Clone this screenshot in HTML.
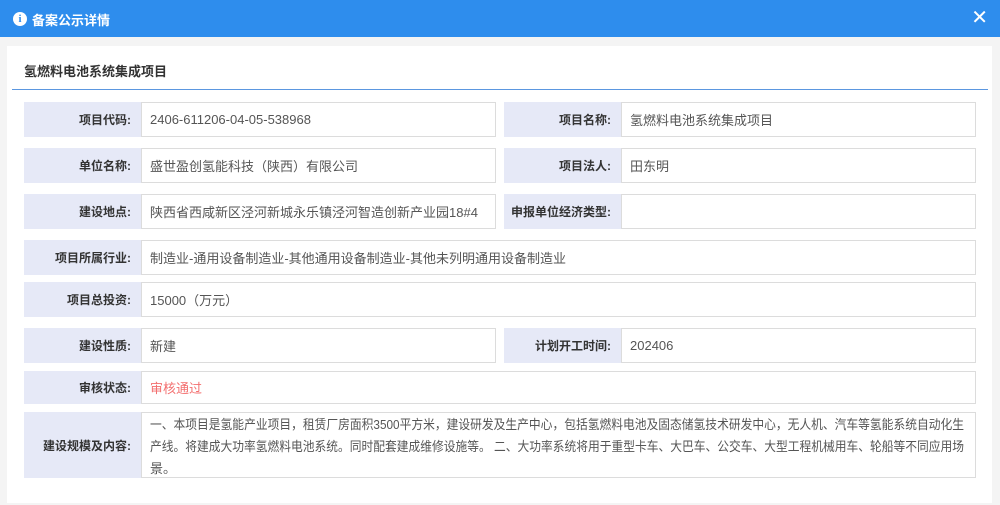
<!DOCTYPE html>
<html><head><meta charset="utf-8"><style>
*{margin:0;padding:0;box-sizing:border-box}
body{width:1000px;height:505px;background:#f4f4f4;font-family:"Liberation Sans","Noto Sans CJK SC",sans-serif;position:relative;overflow:hidden}
.hd{position:absolute;left:0;top:0;width:1000px;height:37px;background:#2e8ded;color:#fff;font-size:13px}
.hd .ic{position:absolute;left:13px;top:12px;width:14px;height:14px;border-radius:50%;background:#fff;color:#2e8ded;font-size:11px;font-weight:bold;text-align:center;line-height:14px;font-family:"Liberation Serif",serif}
.hd .t{position:absolute;left:32px;top:10px;font-weight:bold}
.hd .x{position:absolute;right:12px;top:8px;font-size:20px;line-height:20px;font-weight:normal}
.pn{position:absolute;left:7px;top:46px;width:985px;height:457px;background:#fff}
.ti{position:absolute;left:24px;top:61px;font-size:13px;font-weight:bold;color:#333}
.ln{position:absolute;left:12px;top:89px;width:976px;height:1px;background:#5b97e0}
.l{position:absolute;background:#e6e9f7;font-size:12px;font-weight:bold;color:#333;text-align:right;padding-right:10px;display:flex;align-items:center;justify-content:flex-end}
.v{position:absolute;background:#fff;border:1px solid #dcdcdc;font-size:13px;color:#555;padding-left:8px;display:flex;align-items:center}
.m{display:block;padding:0}
</style></head><body>
<div class="hd"><div class="ic">i</div><div class="t">备案公示详情</div><div class="x">✕</div></div>
<div class="pn"></div>
<div class="ti">氢燃料电池系统集成项目</div>
<div class="ln"></div>

<div class="l" style="left:24px;top:102px;width:117px;height:35px">项目代码:</div>
<div class="v" style="left:141px;top:102px;width:355px;height:35px">2406-611206-04-05-538968</div>
<div class="l" style="left:504px;top:102px;width:117px;height:35px">项目名称:</div>
<div class="v" style="left:621px;top:102px;width:355px;height:35px">氢燃料电池系统集成项目</div>

<div class="l" style="left:24px;top:148px;width:117px;height:35px">单位名称:</div>
<div class="v" style="left:141px;top:148px;width:355px;height:35px">盛世盈创氢能科技（陕西）有限公司</div>
<div class="l" style="left:504px;top:148px;width:117px;height:35px">项目法人:</div>
<div class="v" style="left:621px;top:148px;width:355px;height:35px">田东明</div>

<div class="l" style="left:24px;top:194px;width:117px;height:35px">建设地点:</div>
<div class="v" style="left:141px;top:194px;width:355px;height:35px">陕西省西咸新区泾河新城永乐镇泾河智造创新产业园18#4</div>
<div class="l" style="left:504px;top:194px;width:117px;height:35px">申报单位经济类型:</div>
<div class="v" style="left:621px;top:194px;width:355px;height:35px"></div>

<div class="l" style="left:24px;top:240px;width:117px;height:35px">项目所属行业:</div>
<div class="v" style="left:141px;top:240px;width:835px;height:35px">制造业-通用设备制造业-其他通用设备制造业-其他未列明通用设备制造业</div>

<div class="l" style="left:24px;top:282px;width:117px;height:35px">项目总投资:</div>
<div class="v" style="left:141px;top:282px;width:835px;height:35px">15000（万元）</div>

<div class="l" style="left:24px;top:328px;width:117px;height:35px">建设性质:</div>
<div class="v" style="left:141px;top:328px;width:355px;height:35px">新建</div>
<div class="l" style="left:504px;top:328px;width:117px;height:35px">计划开工时间:</div>
<div class="v" style="left:621px;top:328px;width:355px;height:35px">202406</div>

<div class="l" style="left:24px;top:371px;width:117px;height:33px">审核状态:</div>
<div class="v" style="left:141px;top:371px;width:835px;height:33px;color:#f36f6f">审核通过</div>

<div class="l" style="left:24px;top:412px;width:117px;height:66px">建设规模及内容:</div>
<div class="v m" style="left:141px;top:412px;width:835px;height:66px">
<svg width="833" height="64" style="display:block" font-family="Liberation Sans, Noto Sans CJK SC, sans-serif" font-size="13" fill="#555">
<text x="8" y="16" textLength="814" lengthAdjust="spacingAndGlyphs">一、本项目是氢能产业项目，租赁厂房面积3500平方米，建设研发及生产中心，包括氢燃料电池及固态储氢技术研发中心，无人机、汽车等氢能系统自动化生</text>
<text x="8" y="38" textLength="814" lengthAdjust="spacingAndGlyphs">产线。将建成大功率氢燃料电池系统。同时配套建成维修设施等。 二、大功率系统将用于重型卡车、大巴车、公交车、大型工程机械用车、轮船等不同应用场</text>
<text x="8" y="60">景。</text>
</svg></div>
</body></html>
